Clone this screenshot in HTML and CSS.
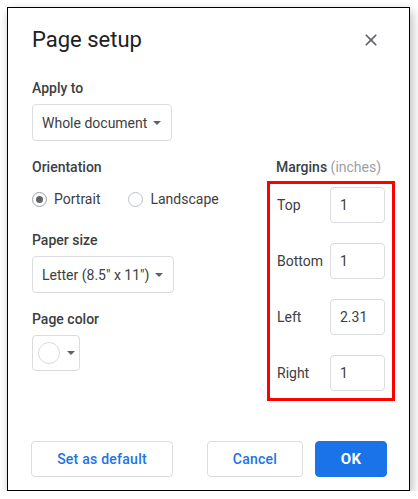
FILE: index.html
```html
<!DOCTYPE html>
<html lang="en">
<head>
<meta charset="utf-8">
<title>Page setup</title>
<link rel="stylesheet" href="styles.css">
</head>
<body>
<div class="dialog">
  <div class="header">
    <h1 class="title">Page setup</h1>
    <button class="close" aria-label="Close">
      <svg width="20" height="20" viewBox="0 0 24 24"><path d="M19 6.41L17.59 5 12 10.59 6.41 5 5 6.41 10.59 12 5 17.59 6.41 19 12 13.41 17.59 19 19 17.59 13.41 12z" fill="#5f6368"/></svg>
    </button>
  </div>
  <div class="body">
    <div class="col-left">
      <div class="label">Apply to</div>
      <div class="select">
        <span class="select-text">Whole document</span><span class="caret"></span>
      </div>
      <div class="label gap-16">Orientation</div>
      <div class="radios">
        <label class="radio"><span class="radio-circle checked"></span><span>Portrait</span></label>
        <label class="radio"><span class="radio-circle"></span><span>Landscape</span></label>
      </div>
      <div class="label gap-21">Paper size</div>
      <div class="select">
        <span class="select-text">Letter (8.5" x 11")</span><span class="caret"></span>
      </div>
      <div class="label gap-16">Page color</div>
      <div class="color-btn">
        <span class="swatch"></span><span class="caret"></span>
      </div>
    </div>
    <div class="col-right">
      <div class="label margins-title">Margins <span class="muted">(inches)</span></div>
      <div class="margins-box">
        <div class="margin-row"><span class="margin-label">Top</span><div class="num-input">1</div></div>
        <div class="margin-row"><span class="margin-label">Bottom</span><div class="num-input">1</div></div>
        <div class="margin-row"><span class="margin-label">Left</span><div class="num-input">2.31</div></div>
        <div class="margin-row"><span class="margin-label">Right</span><div class="num-input">1</div></div>
      </div>
    </div>
  </div>
  <div class="footer">
    <button class="btn btn-default">Set as default</button>
    <div class="footer-right">
      <button class="btn btn-cancel">Cancel</button>
      <button class="btn btn-ok">OK</button>
    </div>
  </div>
</div>
</body>
</html>
```

FILE: styles.css
```css
* { box-sizing: border-box; }

html, body {
  margin: 0;
  padding: 0;
  background: #ffffff;
}

body {
  font-family: Roboto, "Liberation Sans", sans-serif;
  color: #3c4043;
  font-size: 14px;
  line-height: 20px;
}

.dialog {
  margin: 7px 0 0 7px;
  width: 403px;
  height: 484px;
  border: 1px solid #000000;
  background: #ffffff;
  box-shadow: 2px 4px 10px rgba(0, 0, 0, 0.28);
  display: flex;
  flex-direction: column;
}

.header {
  display: flex;
  align-items: center;
  justify-content: space-between;
  padding: 18px 26px 0 24px;
}

.title {
  margin: 0;
  font-size: 22px;
  line-height: 28px;
  font-weight: 400;
  color: #202124;
}

.close {
  width: 24px;
  height: 24px;
  padding: 0;
  border: 0;
  background: transparent;
  display: flex;
  align-items: center;
  justify-content: center;
}

.body {
  display: flex;
  padding: 24px 14px 0 24px;
}

.col-left {
  display: flex;
  flex-direction: column;
  align-items: flex-start;
}

.label {
  font-weight: 500;
  color: #3c4043;
  height: 20px;
  white-space: nowrap;
}

.gap-16 { margin-top: 16px; }
.gap-21 { margin-top: 21px; }

.select {
  margin-top: 6px;
  height: 37px;
  border: 1px solid #dadce0;
  border-radius: 4px;
  display: flex;
  align-items: center;
  padding: 0 10px 0 9px;
  color: #3c4043;
  white-space: nowrap;
}

.caret {
  flex-shrink: 0;
  width: 0;
  height: 0;
  border-left: 4px solid transparent;
  border-right: 4px solid transparent;
  border-top: 4px solid #5f6368;
  margin-left: 6px;
}

.radios {
  margin-top: 12px;
  display: flex;
  align-items: center;
  gap: 28px;
  height: 20px;
}

.radio {
  display: flex;
  align-items: center;
  gap: 7px;
  color: #3c4043;
  white-space: nowrap;
}

.radio-circle {
  width: 15px;
  height: 15px;
  border: 1px solid #bdc1c6;
  border-radius: 50%;
  display: flex;
  align-items: center;
  justify-content: center;
}

.radio-circle.checked { border-color: #9aa0a6; }

.radio-circle.checked::after {
  content: "";
  width: 7px;
  height: 7px;
  border-radius: 50%;
  background: #5f6368;
}

.color-btn {
  margin-top: 6px;
  width: 48px;
  height: 36px;
  border: 1px solid #dadce0;
  border-radius: 4px;
  display: flex;
  align-items: center;
  padding-left: 5px;
}

.swatch {
  width: 22px;
  height: 22px;
  border: 1px solid #dadce0;
  border-radius: 50%;
  background: #ffffff;
}

.color-btn .caret { margin-left: 7px; }

.col-right {
  margin-left: auto;
  margin-top: 79px;
  width: 128px;
  flex-shrink: 0;
}

.margins-title {
  padding-left: 9px;
}

.muted {
  color: #9aa0a6;
  font-weight: 400;
}

.margins-box {
  margin-top: 4px;
  border: 3px solid #ff0000;
  padding: 3px 7px 7px 7px;
  display: flex;
  flex-direction: column;
  gap: 20px;
}

.margin-row {
  display: flex;
  align-items: center;
  justify-content: space-between;
  height: 36px;
}

.margin-label {
  color: #3c4043;
}

.num-input {
  width: 55px;
  height: 36px;
  border: 1px solid #dadce0;
  border-radius: 4px;
  padding-left: 9px;
  display: flex;
  align-items: center;
  color: #3c4043;
}

.footer {
  margin-top: auto;
  display: flex;
  align-items: center;
  padding: 0 22px 13px 23px;
}

.footer-right {
  margin-left: auto;
  display: flex;
  gap: 12px;
}

.btn {
  height: 36px;
  border-radius: 4px;
  font-family: Roboto, "Liberation Sans", sans-serif;
  font-size: 14px;
  font-weight: 500;
  letter-spacing: 0.25px;
  padding: 0;
  cursor: pointer;
}

.btn-default {
  width: 142px;
  background: #ffffff;
  border: 1px solid #dadce0;
  color: #1a73e8;
}

.btn-cancel {
  width: 96px;
  background: #ffffff;
  border: 1px solid #dadce0;
  color: #1a73e8;
}

.btn-ok {
  width: 72px;
  background: #1a73e8;
  border: 1px solid #1a73e8;
  color: #ffffff;
  font-size: 15px;
  font-weight: 700;
}
```
